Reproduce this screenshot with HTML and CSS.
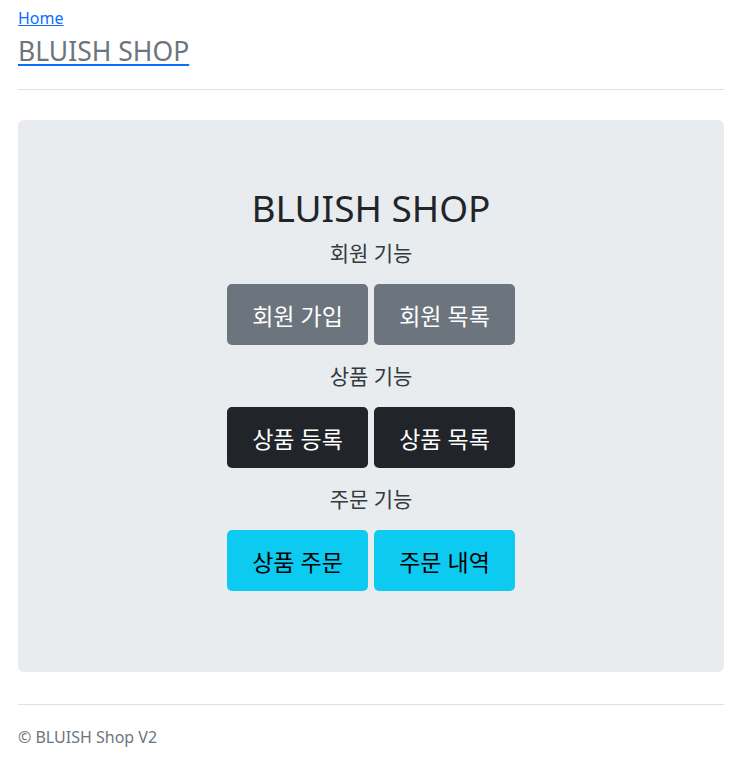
FILE: index.html
```html
<!DOCTYPE html>
<html lang="ko">
<head>
<meta charset="utf-8">
<title>BLUISH SHOP</title>
<link rel="stylesheet" href="styles.css">
</head>
<body>
<div class="page">
  <header class="site-header">
    <a class="home-link" href="#">Home</a>
    <a class="brand" href="#"><span>BLUISH SHOP</span></a>
  </header>
  <hr class="rule">
  <main class="jumbo">
    <h1 class="jumbo-title">BLUISH SHOP</h1>
    <p class="section-label">회원 기능</p>
    <div class="btn-row">
      <a class="btn btn-secondary" href="#">회원 가입</a>
      <a class="btn btn-secondary" href="#">회원 목록</a>
    </div>
    <p class="section-label">상품 기능</p>
    <div class="btn-row">
      <a class="btn btn-dark" href="#">상품 등록</a>
      <a class="btn btn-dark" href="#">상품 목록</a>
    </div>
    <p class="section-label">주문 기능</p>
    <div class="btn-row">
      <a class="btn btn-info" href="#">상품 주문</a>
      <a class="btn btn-info" href="#">주문 내역</a>
    </div>
  </main>
  <hr class="rule footer-rule">
  <footer class="site-footer">© BLUISH Shop V2</footer>
</div>
</body>
</html>
```
FILE: styles.css
```css
html, body {
  margin: 0;
  padding: 0;
  background: #fff;
}
body {
  font-family: "Noto Sans", "Noto Sans CJK KR", sans-serif;
  color: #212529;
}
.page {
  padding: 0 26px 0 18px;
}
.site-header {
  display: flex;
  flex-direction: column;
  align-items: flex-start;
  padding-top: 7px;
}
.home-link {
  font-size: 16px;
  line-height: 22px;
  color: #0d6efd;
  text-decoration: underline;
}
.brand {
  font-size: 26.5px;
  line-height: 36px;
  margin-top: 4px;
  color: #0d6efd;
  text-decoration: underline;
  text-underline-offset: 3px;
}
.brand span {
  color: #6c757d;
}
.rule {
  border: 0;
  border-top: 1px solid #dee2e6;
  margin: 20px 0 30px;
}
.jumbo {
  background: #e9ecef;
  border-radius: 6px;
  padding: 64px 0 81px;
  display: flex;
  flex-direction: column;
  align-items: center;
}
.jumbo-title {
  margin: 0 0 6px;
  font-size: 37px;
  font-weight: 400;
  line-height: 48px;
}
.section-label {
  margin: 0 0 16px;
  font-size: 21px;
  line-height: 30px;
  color: #343a40;
}
.btn-row {
  display: flex;
  gap: 6px;
  margin-bottom: 16px;
}
.btn-row:last-child {
  margin-bottom: 0;
}
.btn {
  width: 141px;
  height: 61px;
  display: flex;
  align-items: center;
  justify-content: center;
  border-radius: 5px;
  font-size: 23px;
  text-decoration: none;
}
.btn-secondary {
  background: #6c757d;
  color: #fff;
}
.btn-dark {
  background: #212529;
  color: #fff;
}
.btn-info {
  background: #0dcaf0;
  color: #000;
}
.footer-rule {
  margin: 32px 0 20px;
}
.site-footer {
  font-size: 16px;
  line-height: 24px;
  color: #6c757d;
}
```
